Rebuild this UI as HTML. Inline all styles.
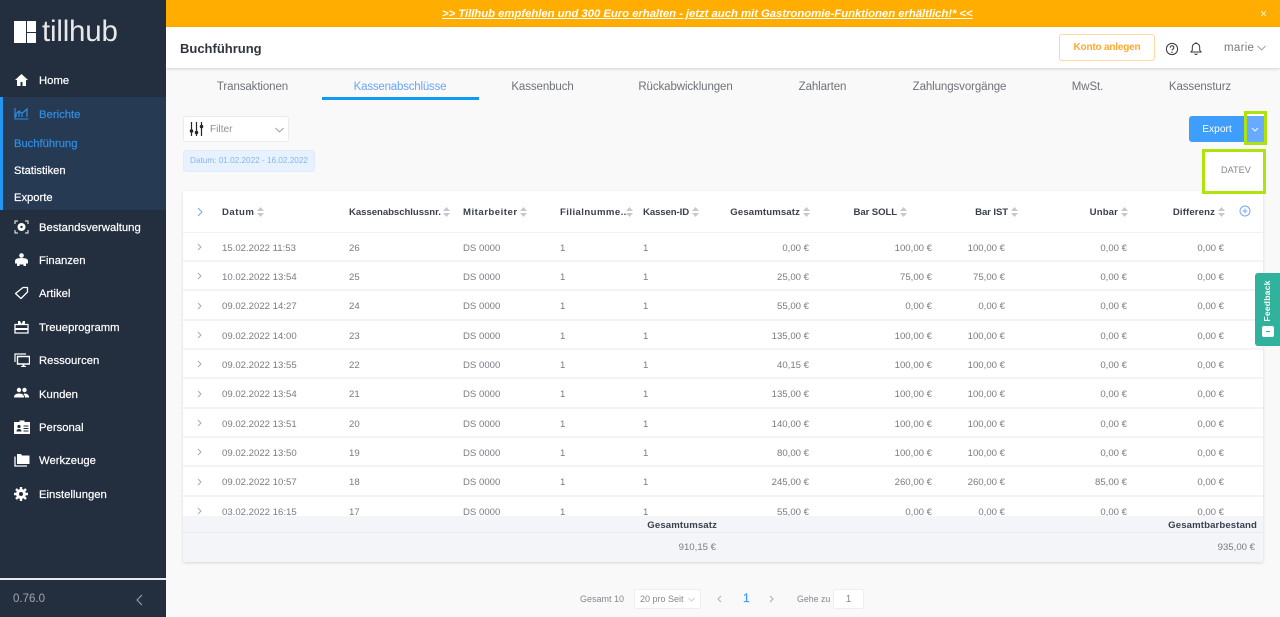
<!DOCTYPE html>
<html lang="de"><head><meta charset="utf-8"><title>tillhub</title>
<style>
*{box-sizing:border-box}
html,body{margin:0;padding:0;width:1280px;height:617px;overflow:hidden;background:#f9f9fa;font-family:"Liberation Sans",sans-serif;color:#797b82}
.a,.r span,.h span{position:absolute;white-space:nowrap}
.side{position:absolute;left:0;top:0;width:166px;height:617px;background:#232e3e}
.nav{position:absolute;left:39px;font-size:11.3px;line-height:16px;color:#fff;white-space:nowrap;-webkit-text-stroke:.2px currentColor;margin-top:1px}
.sub{font-size:11.200px;margin-top:0}
.ic{position:absolute;left:14px}
.tab{position:absolute;top:79px;font-size:11.500px;line-height:16px;color:#6f7279;letter-spacing:-.1px;white-space:nowrap;transform:translateX(-50%)}
.r{position:absolute;left:183px;width:1080px;height:29px;border-bottom:2px solid #f3f4f8;background:#fff;font-size:9.600px;line-height:14px}
.r span{top:8px;margin-top:.5px}
.c1{left:39px}.c2{left:166px}.c3{left:280px}.c4{left:377px}.c5{left:460px}
.c6{right:454px}.c7{right:331px}.c8{right:258px}.c9{right:136px}.c10{right:39px}
.h span{top:206px;font-size:9.600px;line-height:13px;font-weight:bold;color:#3a3f4c;letter-spacing:.12px}
.s{position:absolute;top:207px;width:7px;height:10px}
.foot{font-size:9.600px;line-height:14px}
</style></head><body>

<div class="a" style="left:166px;top:0;width:1114px;height:27px;background:#ffad00"></div>
<div class="a" style="left:442px;top:7px;font-size:11.400px;line-height:14px;font-weight:bold;font-style:italic;color:#fff;text-decoration:underline;letter-spacing:-.06px">&gt;&gt; Tillhub empfehlen und 300 Euro erhalten - jetzt auch mit Gastronomie-Funktionen erhältlich!* &lt;&lt;</div>
<svg class="a" style="left:1260px;top:10px" width="7" height="7" viewBox="0 0 7 7"><path d="M1 1l5 5M6 1L1 6" stroke="#fff" stroke-width=".8"/></svg>

<div class="a" style="left:166px;top:27px;width:1114px;height:41px;background:#fff;box-shadow:0 1px 3px rgba(0,0,0,.16)"></div>
<div class="a" style="left:180px;top:40px;font-size:13px;line-height:17px;font-weight:bold;color:#30353f">Buchführung</div>
<div class="a" style="left:1059px;top:34px;width:96px;height:27px;background:#fff;border:1px solid #ffd9a0;border-radius:3px;color:#ffa92e;font-size:10px;font-weight:bold;line-height:26px;text-align:center;letter-spacing:-.19px">Konto anlegen</div>
<svg class="a" style="left:1165px;top:42px" width="14" height="14" viewBox="0 0 14 14"><circle cx="7" cy="7" r="5.600" fill="none" stroke="#30353f" stroke-width="1"/><path d="M5.200 5.600a1.800 1.800 0 1 1 2.600 1.600c-.6.300-.8.600-.8 1.200" fill="none" stroke="#30353f" stroke-width="1"/><circle cx="7" cy="10.300" r=".7" fill="#30353f"/></svg>
<svg class="a" style="left:1189px;top:41px" width="14" height="15" viewBox="0 0 14 15"><path d="M2 11h10l-1.300-1.800V6.200A3.700 3.700 0 0 0 7 2.400a3.700 3.700 0 0 0-3.700 3.800v3z" fill="none" stroke="#30353f" stroke-width="1"/><path d="M5.600 12.600a1.500 1.500 0 0 0 2.800 0M7 1v1.400" fill="none" stroke="#30353f" stroke-width="1"/></svg>
<div class="a" style="left:1224px;top:41px;font-size:11.500px;line-height:15px;color:#777a80;letter-spacing:.3px">marie</div>
<svg class="a" style="left:1257px;top:45px" width="9" height="6" viewBox="0 0 9 6"><path d="M.5 1l4 4 4-4" fill="none" stroke="#9a9ca3" stroke-width=".9"/></svg>

<div class="tab" style="left:252.500px">Transaktionen</div>
<div class="tab" style="left:400px;color:#6aa6f5;letter-spacing:-.2px">Kassenabschlüsse</div>
<div class="tab" style="left:542.500px">Kassenbuch</div>
<div class="tab" style="left:685.500px">Rückabwicklungen</div>
<div class="tab" style="left:822.500px">Zahlarten</div>
<div class="tab" style="left:959.500px">Zahlungsvorgänge</div>
<div class="tab" style="left:1087.500px">MwSt.</div>
<div class="tab" style="left:1200px">Kassensturz</div>
<div class="a" style="left:322px;top:97px;width:157px;height:3px;background:#0f9bf5"></div>

<div class="a" style="left:183px;top:116px;width:106px;height:26px;background:#fff;border:1px solid #e9ebef;border-radius:3px"></div>
<svg class="a" style="left:189px;top:122px" width="15" height="14" viewBox="0 0 15 14"><path d="M2.500 0v14M7.500 0v14M12.500 0v14" stroke="#23262c" stroke-width="1.200"/><circle cx="2.500" cy="9" r="1.800" fill="#23262c"/><circle cx="7.500" cy="10.500" r="1.800" fill="#23262c"/><circle cx="12.500" cy="4.500" r="1.800" fill="#23262c"/></svg>
<div class="a" style="left:210px;top:122px;height:14px;font-size:10px;line-height:14px;color:#8d8f96;letter-spacing:.05px;transform:translateY(1px)">Filter</div>
<svg class="a" style="left:275px;top:127px" width="9" height="6" viewBox="0 0 9 6"><path d="M.5 1l4 4 4-4" fill="none" stroke="#9a9ca3" stroke-width=".9"/></svg>
<div class="a" style="left:183px;top:150px;width:132px;height:22px;background:#e8f2ff;border:1px solid #dcebff;border-radius:3px;color:#85b4f7;font-size:8.200px;line-height:20px;text-align:center">Datum: 01.02.2022 - 16.02.2022</div>

<div class="a" style="left:1189px;top:116px;width:55px;height:26px;background:#3f9dfc;border-radius:3px 0 0 3px;color:#fff;font-size:10.200px;line-height:27px;text-align:center;padding-left:1px">Export</div>
<div class="a" style="left:1244px;top:111px;width:23px;height:34px;border:3px solid #aee30b;background:linear-gradient(#fff 0,#fff 2px,#68aaff 2px)"></div>
<svg class="a" style="left:1251px;top:127px" width="8" height="5" viewBox="0 0 8 5"><path d="M1 1l3 3 3-3" fill="none" stroke="#fff" stroke-width=".9"/></svg>
<div class="a" style="left:1202px;top:149px;width:64px;height:45px;border:3px solid #aee30b;background:#fff;color:#85878e;font-size:9.100px;line-height:37px;padding-left:16px;letter-spacing:.05px;z-index:3">DATEV</div>

<div class="a" style="left:183px;top:191px;width:1080px;height:371px;background:#fff;box-shadow:0 1px 3px rgba(0,0,0,.14)"></div>
<div class="a" style="left:183px;top:232px;width:1080px;height:1px;background:#f0f1f5"></div>
<svg class="a" style="left:197px;top:207px" width="6" height="10" viewBox="0 0 6 10"><path d="M1 1l4 4-4 4" fill="none" stroke="#77a9f2" stroke-width="1"/></svg>
<div class="h">
<span style="left:222px;letter-spacing:.5px">Datum</span><span style="left:349px;letter-spacing:-.05px">Kassenabschlussnr.</span><span style="left:463px;letter-spacing:.5px">Mitarbeiter</span><span style="left:560px;letter-spacing:.42px">Filialnumme...</span><span style="left:643px;letter-spacing:-.1px">Kassen-ID</span><span style="right:480px">Gesamtumsatz</span><span style="right:383px;letter-spacing:-.1px">Bar SOLL</span><span style="right:272px;letter-spacing:-.1px">Bar IST</span><span style="right:162px">Unbar</span><span style="right:65px">Differenz</span>
</div>
<svg width="0" height="0" style="position:absolute"><defs><symbol id="srt" viewBox="0 0 7 10"><path d="M3.500 0L7 4H0zM0 6h7L3.500 10z" fill="#c5c8ce"/></symbol></defs></svg>
<svg class="s" style="left:257px"><use href="#srt"/></svg>
<svg class="s" style="left:443px"><use href="#srt"/></svg>
<svg class="s" style="left:520px"><use href="#srt"/></svg>
<svg class="s" style="left:626px"><use href="#srt"/></svg>
<svg class="s" style="left:692px"><use href="#srt"/></svg>
<svg class="s" style="left:803px"><use href="#srt"/></svg>
<svg class="s" style="left:900px"><use href="#srt"/></svg>
<svg class="s" style="left:1011px"><use href="#srt"/></svg>
<svg class="s" style="left:1121px"><use href="#srt"/></svg>
<svg class="s" style="left:1218px"><use href="#srt"/></svg>
<svg class="a" style="left:1239px;top:205px" width="12" height="12" viewBox="0 0 12 12"><circle cx="6" cy="6" r="5" fill="none" stroke="#7aa9f0"/><path d="M3.500 6h5M6 3.500v5" stroke="#7aa9f0"/></svg>

<svg width="0" height="0" style="position:absolute"><defs><symbol id="chv" viewBox="0 0 5 8"><path d="M1 1l3 3-3 3" fill="none" stroke="#a8aab0" stroke-width="1"/></symbol></defs></svg>

<div class="r" style="top:233px"><svg class="a" style="left:14px;top:10px" width="5" height="8"><use href="#chv"/></svg><span class="c1">15.02.2022 11:53</span><span class="c2">26</span><span class="c3">DS 0000</span><span class="c4">1</span><span class="c5">1</span><span class="c6">0,00 €</span><span class="c7">100,00 €</span><span class="c8">100,00 €</span><span class="c9">0,00 €</span><span class="c10">0,00 €</span></div>
<div class="r" style="top:262.300px"><svg class="a" style="left:14px;top:10px" width="5" height="8"><use href="#chv"/></svg><span class="c1">10.02.2022 13:54</span><span class="c2">25</span><span class="c3">DS 0000</span><span class="c4">1</span><span class="c5">1</span><span class="c6">25,00 €</span><span class="c7">75,00 €</span><span class="c8">75,00 €</span><span class="c9">0,00 €</span><span class="c10">0,00 €</span></div>
<div class="r" style="top:291.700px"><svg class="a" style="left:14px;top:10px" width="5" height="8"><use href="#chv"/></svg><span class="c1">09.02.2022 14:27</span><span class="c2">24</span><span class="c3">DS 0000</span><span class="c4">1</span><span class="c5">1</span><span class="c6">55,00 €</span><span class="c7">0,00 €</span><span class="c8">0,00 €</span><span class="c9">0,00 €</span><span class="c10">0,00 €</span></div>
<div class="r" style="top:321px"><svg class="a" style="left:14px;top:10px" width="5" height="8"><use href="#chv"/></svg><span class="c1">09.02.2022 14:00</span><span class="c2">23</span><span class="c3">DS 0000</span><span class="c4">1</span><span class="c5">1</span><span class="c6">135,00 €</span><span class="c7">100,00 €</span><span class="c8">100,00 €</span><span class="c9">0,00 €</span><span class="c10">0,00 €</span></div>
<div class="r" style="top:350.300px"><svg class="a" style="left:14px;top:10px" width="5" height="8"><use href="#chv"/></svg><span class="c1">09.02.2022 13:55</span><span class="c2">22</span><span class="c3">DS 0000</span><span class="c4">1</span><span class="c5">1</span><span class="c6">40,15 €</span><span class="c7">100,00 €</span><span class="c8">100,00 €</span><span class="c9">0,00 €</span><span class="c10">0,00 €</span></div>
<div class="r" style="top:379.700px"><svg class="a" style="left:14px;top:10px" width="5" height="8"><use href="#chv"/></svg><span class="c1">09.02.2022 13:54</span><span class="c2">21</span><span class="c3">DS 0000</span><span class="c4">1</span><span class="c5">1</span><span class="c6">135,00 €</span><span class="c7">100,00 €</span><span class="c8">100,00 €</span><span class="c9">0,00 €</span><span class="c10">0,00 €</span></div>
<div class="r" style="top:409px"><svg class="a" style="left:14px;top:10px" width="5" height="8"><use href="#chv"/></svg><span class="c1">09.02.2022 13:51</span><span class="c2">20</span><span class="c3">DS 0000</span><span class="c4">1</span><span class="c5">1</span><span class="c6">140,00 €</span><span class="c7">100,00 €</span><span class="c8">100,00 €</span><span class="c9">0,00 €</span><span class="c10">0,00 €</span></div>
<div class="r" style="top:438.300px"><svg class="a" style="left:14px;top:10px" width="5" height="8"><use href="#chv"/></svg><span class="c1">09.02.2022 13:50</span><span class="c2">19</span><span class="c3">DS 0000</span><span class="c4">1</span><span class="c5">1</span><span class="c6">80,00 €</span><span class="c7">100,00 €</span><span class="c8">100,00 €</span><span class="c9">0,00 €</span><span class="c10">0,00 €</span></div>
<div class="r" style="top:467.700px"><svg class="a" style="left:14px;top:10px" width="5" height="8"><use href="#chv"/></svg><span class="c1">09.02.2022 10:57</span><span class="c2">18</span><span class="c3">DS 0000</span><span class="c4">1</span><span class="c5">1</span><span class="c6">245,00 €</span><span class="c7">260,00 €</span><span class="c8">260,00 €</span><span class="c9">85,00 €</span><span class="c10">0,00 €</span></div>
<div class="r" style="top:497px;height:19px;overflow:hidden;border-bottom:0"><svg class="a" style="left:14px;top:10px" width="5" height="8"><use href="#chv"/></svg><span class="c1">03.02.2022 16:15</span><span class="c2">17</span><span class="c3">DS 0000</span><span class="c4">1</span><span class="c5">1</span><span class="c6">55,00 €</span><span class="c7">0,00 €</span><span class="c8">0,00 €</span><span class="c9">0,00 €</span><span class="c10">0,00 €</span></div>

<div class="a" style="left:183px;top:516px;width:1080px;height:46px;background:#f3f5f9"></div>
<div class="a" style="left:183px;top:532px;width:1080px;height:1px;background:#e9ebf1"></div>
<div class="a foot" style="right:563px;top:519px;font-weight:bold;color:#3a3f4c;letter-spacing:.12px">Gesamtumsatz</div>
<div class="a foot" style="right:564px;top:541px">910,15 €</div>
<div class="a foot" style="right:23px;top:519px;font-weight:bold;color:#3a3f4c;letter-spacing:.12px">Gesamtbarbestand</div>
<div class="a foot" style="right:25px;top:541px">935,00 €</div>

<div class="a foot" style="left:580px;top:592px;font-size:9px;color:#85878e">Gesamt 10</div>
<div class="a" style="left:634px;top:589px;width:67px;height:20px;background:#fff;border:1px solid #eceef1;border-radius:2px;font-size:9px;line-height:19px;padding-left:5px;color:#85878e">20 pro Seit</div>
<svg class="a" style="left:688px;top:597px" width="7" height="5" viewBox="0 0 7 5"><path d="M.5 1l3 3 3-3" fill="none" stroke="#c3c5ca" stroke-width=".8"/></svg>
<svg class="a" style="left:717px;top:595px" width="5" height="8" viewBox="0 0 5 8"><path d="M4 1L1 4l3 3" fill="none" stroke="#b0b2b8"/></svg>
<div class="a" style="left:743px;top:591px;font-size:12px;line-height:15px;color:#3f96fb;-webkit-text-stroke:.2px #3f96fb">1</div>
<svg class="a" style="left:769px;top:595px" width="5" height="8"><use href="#chv"/></svg>
<div class="a foot" style="left:797px;top:592px;font-size:8.800px;color:#85878e">Gehe zu</div>
<div class="a" style="left:833px;top:589px;width:31px;height:20px;background:#fff;border:1px solid #eceef1;border-radius:2px;font-size:10px;line-height:20px;text-align:center;color:#85878e">1</div>

<div class="a" style="left:1255px;top:273px;width:25px;height:73px;background:#31b29d;border-radius:3px 0 0 3px"></div>
<div class="a" style="left:1237px;top:294px;width:60px;height:14px;font-size:8.600px;line-height:14px;font-weight:bold;color:#fff;text-align:center;letter-spacing:.2px;transform:rotate(-90deg)">Feedback</div>
<div class="a" style="left:1262px;top:326px;width:12px;height:11px;background:#fff;border-radius:2px"></div>
<div class="a" style="left:1266px;top:330px;width:4px;height:2px;border-bottom:1px solid #31b29d"></div>

<div class="side"></div>
<div class="a" style="left:0;top:97px;width:166px;height:113px;background:#263a53"></div>
<div class="a" style="left:0;top:97px;width:3px;height:113px;background:#2196f3"></div>
<svg class="a" style="left:14px;top:21px" width="22" height="22" viewBox="0 0 22 22"><path d="M0 0h12v22H0zM13 0h9v11h-9zM13 12h9v10h-9z" fill="#fff"/></svg>
<div class="a" style="left:42px;top:14px;font-size:29.500px;line-height:36px;color:#e6e8ea;letter-spacing:-.2px">tillhub</div>

<svg class="ic" style="top:73px" width="15" height="14" viewBox="0 0 15 14"><path d="M7.500 1L1 7h2v6h3.500V9h2v4H12V7h2z" fill="#fff"/></svg>
<div class="nav" style="top:72px">Home</div>
<svg class="ic" style="top:107px" width="15" height="13" viewBox="0 0 15 13"><path d="M1 1v11h13.500" fill="none" stroke="#2d8fe6" stroke-width="1.100"/><path d="M2 10V7l3-3 3 2.500L13 2v8M5 4v6M8 6.500V10" fill="none" stroke="#2d8fe6" stroke-width="1.200"/></svg>
<div class="nav" style="top:106px;color:#2f8fe5">Berichte</div>
<div class="nav sub" style="left:14px;top:136px;color:#2f8fe5">Buchführung</div>
<div class="nav sub" style="left:14px;top:163px">Statistiken</div>
<div class="nav sub" style="left:14px;top:190px">Exporte</div>
<svg class="ic" style="top:220px" width="15" height="14" viewBox="0 0 15 14"><path d="M1 4V1h3M11 1h3v3M14 10v3h-3M4 13H1v-3" fill="none" stroke="#fff"/><circle cx="7.500" cy="7" r="4" fill="#fff"/><circle cx="7.500" cy="7" r="1.200" fill="#232e3e"/></svg>
<div class="nav" style="top:219px">Bestandsverwaltung</div>
<svg class="ic" style="top:253px" width="15" height="14" viewBox="0 0 15 14"><circle cx="7.500" cy="2.500" r="2.300" fill="#fff"/><path d="M1 8q0-3 6.500-3T14 8v2.500h-2V13H9.500v-1.500h-4V13H3v-2.500H1z" fill="#fff"/></svg>
<div class="nav" style="top:252px">Finanzen</div>
<svg class="ic" style="top:286px" width="15" height="14" viewBox="0 0 15 14"><path d="M9 1.500h4.500V6L7 12.500 1.500 7.500z" fill="none" stroke="#fff" stroke-width="1.300" stroke-linejoin="round"/></svg>
<div class="nav" style="top:285px">Artikel</div>
<svg class="ic" style="top:320px" width="15" height="14" viewBox="0 0 15 14"><path d="M1 4.500h13V13H1z" fill="none" stroke="#fff" stroke-width="1.300"/><path d="M1 8h13v2H1zM4 1h2l1.500 3H4zM11 1H9L7.500 4H11z" fill="#fff"/></svg>
<div class="nav" style="top:319px">Treueprogramm</div>
<svg class="ic" style="top:353px" width="16" height="14" viewBox="0 0 16 14"><path d="M1 9V1h11" fill="none" stroke="#fff" stroke-width="1.200"/><path d="M3.500 3.500h12V11h-12z" fill="none" stroke="#fff" stroke-width="1.400"/><path d="M7 13h5v1H7zM8.500 11h2v2h-2z" fill="#fff"/></svg>
<div class="nav" style="top:352px">Ressourcen</div>
<svg class="ic" style="top:387px" width="15" height="12" viewBox="0 0 15 12"><circle cx="5" cy="3" r="2.200" fill="#fff"/><circle cx="10.500" cy="3" r="2.200" fill="#fff"/><path d="M0 10.500q0-4 5-4t5 4zM10.500 6.500q4.500 0 4.500 4h-4q0-2-1.500-3.500z" fill="#fff"/></svg>
<div class="nav" style="top:386px">Kunden</div>
<svg class="ic" style="top:420px" width="16" height="14" viewBox="0 0 16 14"><path d="M0 2h5.500V.5h5V2H16v12H0z" fill="#fff"/><circle cx="5" cy="6.500" r="1.600" fill="#232e3e"/><path d="M2.500 11.500q0-2.500 2.500-2.500t2.500 2.500zM9.500 5.500h5v1h-5zM9.500 8h5v1h-5zM9.500 10.500h5v1h-5z" fill="#232e3e"/></svg>
<div class="nav" style="top:419px">Personal</div>
<svg class="ic" style="top:453px" width="16" height="14" viewBox="0 0 16 14"><path d="M3 1h4l1 1.500h7.500V11H3z" fill="#fff"/><path d="M1 3.500V13h12" fill="none" stroke="#fff" stroke-width="1.300"/></svg>
<div class="nav" style="top:452px">Werkzeuge</div>
<svg class="ic" style="top:487px" width="14" height="14" viewBox="0 0 14 14"><circle cx="7" cy="7" r="3.500" fill="none" stroke="#fff" stroke-width="3"/><path d="M7 0v14M0 7h14M2 2l10 10M12 2L2 12" stroke="#fff" stroke-width="2.400"/><circle cx="7" cy="7" r="2" fill="#232e3e"/></svg>
<div class="nav" style="top:486px">Einstellungen</div>

<div class="a" style="left:0;top:578px;width:166px;height:2px;background:#e8e9eb"></div>
<div class="a" style="left:13px;top:592px;font-size:11.500px;line-height:15px;color:#a2a6ad">0.76.0</div>
<svg class="a" style="left:136px;top:594px" width="7" height="12" viewBox="0 0 7 12"><path d="M6 1L1 6l5 5" fill="none" stroke="#a2a6ad" stroke-width="1"/></svg>
</body></html>
